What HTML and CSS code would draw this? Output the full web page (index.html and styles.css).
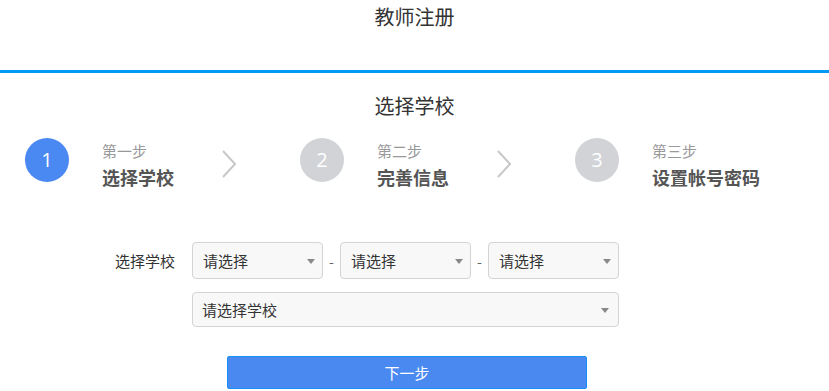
FILE: index.html
```html
<!DOCTYPE html>
<html>
<head>
    <meta charset="UTF-8">
    <title>教师注册</title>
    <link rel="stylesheet" href="styles.css">
</head>
<body>
    <!-- top title bar -->
    <div class="page-title">教师注册</div>

    <div class="sub-title">选择学校</div>

    <!-- step indicator -->
    <div class="steps">
        <div class="step">
            <div class="step-num active">1</div>
            <div class="step-text">
                <div class="step-small">第一步</div>
                <div class="step-big">选择学校</div>
            </div>
            <svg class="step-arrow" width="14" height="28" viewBox="0 0 14 28">
                <polyline points="1,1 13,14 1,27" fill="none" stroke="#c8c8c8" stroke-width="2"/>
            </svg>
        </div>
        <div class="step">
            <div class="step-num">2</div>
            <div class="step-text">
                <div class="step-small">第二步</div>
                <div class="step-big">完善信息</div>
            </div>
            <svg class="step-arrow" width="14" height="28" viewBox="0 0 14 28">
                <polyline points="1,1 13,14 1,27" fill="none" stroke="#c8c8c8" stroke-width="2"/>
            </svg>
        </div>
        <div class="step last">
            <div class="step-num">3</div>
            <div class="step-text">
                <div class="step-small">第三步</div>
                <div class="step-big">设置帐号密码</div>
            </div>
        </div>
    </div>

    <!-- school form -->
    <div class="form-row">
        <div class="form-label">选择学校</div>
        <div class="select">请选择</div>
        <div class="dash">-</div>
        <div class="select">请选择</div>
        <div class="dash">-</div>
        <div class="select">请选择</div>
    </div>
    <div class="form-row second">
        <div class="form-label"></div>
        <div class="select wide">请选择学校</div>
    </div>

    <div class="btn-row">
        <button class="next-button">下一步</button>
    </div>
</body>
</html>
```

FILE: styles.css
```css
body {
    margin: 0;
    font-family: "Noto Sans CJK SC", "Open Sans", sans-serif;
    color: #333;
    background-color: #fff;
}
.page-title {
    box-sizing: border-box;
    height: 73px;
    border-bottom: 3px solid #0399f7;
    text-align: center;
    font-size: 20px;
    line-height: 28px;
    padding-top: 3px;
}
.sub-title {
    text-align: center;
    font-size: 20px;
    line-height: 26px;
    margin-top: 20px;
}
.steps {
    display: flex;
    padding-left: 25px;
    margin-top: 19px;
}
.step {
    display: flex;
    align-items: flex-start;
    width: 275px;
    flex-shrink: 0;
}
.step.last {
    width: 200px;
}
.step-num {
    width: 44px;
    height: 44px;
    border-radius: 50%;
    background-color: #d1d3d7;
    color: #fff;
    font-family: "Open Sans", sans-serif;
    font-size: 20px;
    line-height: 44px;
    text-align: center;
    flex-shrink: 0;
}
.step-num.active {
    background-color: #4a89f1;
}
.step-text {
    margin-left: 33px;
    margin-top: 3px;
    width: 120px;
}
.step-small {
    font-size: 15px;
    line-height: 20px;
    color: #999;
}
.step-big {
    font-size: 18px;
    line-height: 26px;
    margin-top: 3px;
    font-weight: bold;
    color: #555;
}
.step-arrow {
    flex-shrink: 0;
    margin-top: 12px;
}
.form-row {
    display: flex;
    align-items: center;
    margin-top: 52px;
}
.form-row.second {
    margin-top: 13px;
}
.form-label {
    width: 175px;
    text-align: right;
    font-size: 15px;
    margin-right: 17px;
    color: #333;
}
.select {
    position: relative;
    box-sizing: border-box;
    width: 131px;
    height: 37px;
    line-height: 35px;
    padding-left: 10px;
    border: 1px solid #d4d4d4;
    border-radius: 4px;
    background-color: #f8f8f8;
    font-size: 15px;
    color: #333;
}
.select::after {
    content: "";
    position: absolute;
    right: 7px;
    top: 16px;
    border-left: 4px solid transparent;
    border-right: 4px solid transparent;
    border-top: 5px solid #888;
}
.select.wide {
    width: 427px;
    height: 35px;
    line-height: 33px;
    padding-left: 9px;
}
.select.wide::after {
    top: 15px;
    right: 9px;
}
.dash {
    width: 17px;
    text-align: center;
    font-size: 14px;
    color: #666;
}
.btn-row {
    margin-top: 29px;
    padding-left: 227px;
}
.next-button {
    width: 360px;
    height: 33px;
    background-color: #4a89f0;
    border: 1px solid #1b8ff5;
    border-radius: 2px;
    color: #fff;
    font-family: "Noto Sans CJK SC", sans-serif;
    font-size: 15px;
    cursor: pointer;
}
```
